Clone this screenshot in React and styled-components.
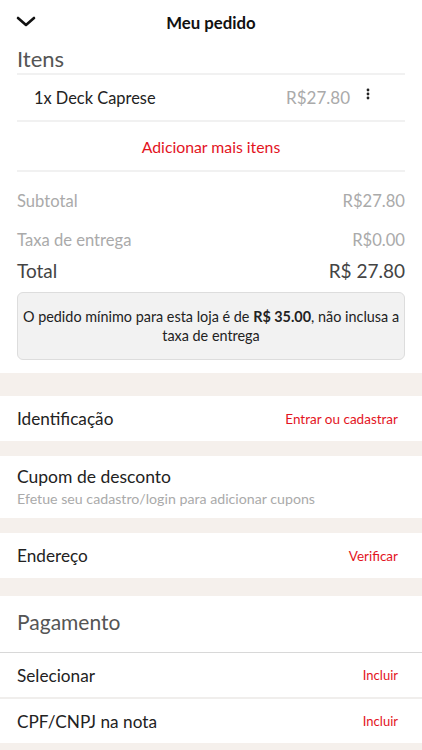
import React from 'react';
import styled, { createGlobalStyle } from 'styled-components';

const GlobalStyle = createGlobalStyle`
  * { box-sizing: border-box; }
  body {
    margin: 0;
    background: #fff;
    font-family: Lato, "Open Sans", sans-serif;
    color: #222;
  }
`;

const RED = '#e3141e';
const BAND = '#f5f0ec';

const Page = styled.div`
  width: 422px;
  height: 750px;
  overflow: hidden;
  background: #fff;
`;

const Header = styled.div`
  height: 44px;
  display: flex;
  align-items: center;
  justify-content: center;
  position: relative;
  h1 {
    margin: 0;
    font-size: 16.8px;
    font-weight: 700;
    color: #111;
  }
`;

const Back = styled.button`
  position: absolute;
  left: 14px;
  top: 12px;
  border: 0;
  background: none;
  padding: 0;
  display: flex;
`;

const Section = styled.div`
  padding: 0 17px;
`;

const SectionTitle = styled.div`
  font-size: 22px;
  color: #555;
  height: 31px;
  display: flex;
  align-items: center;
  border-bottom: 2px solid #f1f1f1;
`;

const ItemRow = styled.div`
  height: 47px;
  display: flex;
  align-items: center;
  padding: 0 19px 0 17px;
  border-bottom: 2px solid #f1f1f1;
  font-size: 16.4px;
  color: #222;
  span.name { flex: 1; }
  span.price { color: #aaa; font-size: 17px; }
`;

const Kebab = styled.div`
  width: 36px;
  display: flex;
  justify-content: center;
  margin-top: -8px;
`;

const AddMore = styled.div`
  height: 50px;
  display: flex;
  align-items: center;
  justify-content: center;
  color: ${RED};
  font-size: 15.8px;
  border-bottom: 2px solid #f1f1f1;
`;

const Line = styled.div`
  display: flex;
  justify-content: space-between;
  align-items: center;
  height: ${p => p.$h}px;
  font-size: ${p => (p.$total ? 19 : 16.6)}px;
  color: ${p => (p.$total ? '#444' : '#aaa')};
`;

const Notice = styled.div`
  margin-top: 2px;
  border: 1px solid #ddd;
  border-radius: 6px;
  background: #f2f2f2;
  padding: 14px 2px;
  text-align: center;
  font-size: 14.4px;
  line-height: 19px;
  color: #222;
  b { font-weight: 700; }
`;

const Spacer = styled.div`
  height: 13px;
`;

const Band = styled.div`
  height: ${p => p.$h}px;
  background: ${p => p.$c || BAND};
`;

const Row = styled.div`
  display: flex;
  align-items: center;
  justify-content: space-between;
  padding: 0 24px 0 17px;
  height: ${p => p.$h || 45}px;
  font-size: 17.2px;
  color: #222;
`;

const Action = styled.span`
  color: ${RED};
  font-size: ${p => p.$size || 13}px;
`;

const Coupon = styled.div`
  height: 62px;
  padding: 10px 17px 0;
  .title { font-size: 17.5px; color: #222; }
  .sub { font-size: 14.2px; color: #aaa; margin-top: 3px; }
`;

const PayTitle = styled.div`
  height: 57px;
  padding: 0 17px 5px;
  display: flex;
  align-items: center;
  font-size: 21px;
  color: #555;
  border-bottom: 1px solid #d8d8d8;
`;

const Chevron = () => (
  <svg width="24" height="20" viewBox="0 0 24 20" fill="none">
    <path d="M4 6l8 7 8-7" stroke="#111" strokeWidth="2.6" strokeLinecap="round" strokeLinejoin="round" />
  </svg>
);

const Dots = () => (
  <svg width="4" height="12" viewBox="0 0 4 12">
    <circle cx="2" cy="2" r="1.4" fill="#222" />
    <circle cx="2" cy="6" r="1.4" fill="#222" />
    <circle cx="2" cy="10" r="1.4" fill="#222" />
  </svg>
);

export default function App() {
  return (
    <>
      <GlobalStyle />
      <Page>
        <Header>
          <Back><Chevron /></Back>
          <h1>Meu pedido</h1>
        </Header>
        <Section>
          <SectionTitle>Itens</SectionTitle>
          <ItemRow>
            <span className="name">1x Deck Caprese</span>
            <span className="price">R$27.80</span>
            <Kebab><Dots /></Kebab>
          </ItemRow>
          <AddMore>Adicionar mais itens</AddMore>
          <Line $h={58}>
            <span>Subtotal</span>
            <span>R$27.80</span>
          </Line>
          <Line $h={20}>
            <span>Taxa de entrega</span>
            <span>R$0.00</span>
          </Line>
          <Line $h={40} $total>
            <span>Total</span>
            <span>R$ 27.80</span>
          </Line>
          <Notice>
            O pedido mínimo para esta loja é de <b>R$ 35.00</b>, não inclusa a taxa de entrega
          </Notice>
        </Section>
        <Spacer />
        <Band $h={23} />
        <Row>
          <span>Identificação</span>
          <Action $size={13.5}>Entrar ou cadastrar</Action>
        </Row>
        <Band $h={15} />
        <Coupon>
          <div className="title">Cupom de desconto</div>
          <div className="sub">Efetue seu cadastro/login para adicionar cupons</div>
        </Coupon>
        <Band $h={15} />
        <Row>
          <span>Endereço</span>
          <Action $size={13.5}>Verificar</Action>
        </Row>
        <Band $h={18} />
        <PayTitle>Pagamento</PayTitle>
        <Row $h={44}>
          <span>Selecionar</span>
          <Action>Incluir</Action>
        </Row>
        <Band $h={2} $c="#f0eeec" />
        <Row $h={44}>
          <span>CPF/CNPJ na nota</span>
          <Action>Incluir</Action>
        </Row>
        <Band $h={10} />
      </Page>
    </>
  );
}
